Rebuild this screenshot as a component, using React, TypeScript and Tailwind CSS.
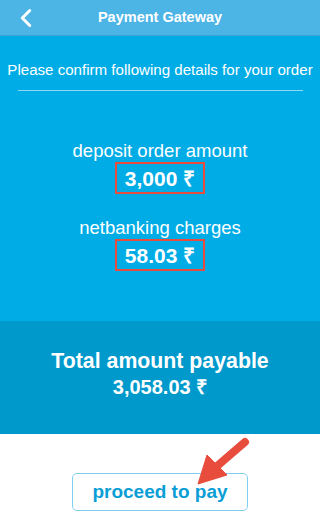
import { ChevronLeft } from "lucide-react";

function Amount({ label, value }: { label: string; value: string }) {
  return (
    <div className="flex flex-col items-center">
      <p className="text-[18.5px] leading-[22px]">{label}</p>
      <div className="border-2 border-[#e84c3d] h-[32px] w-[90px] flex items-center justify-center">
        <span className="text-[21px] font-bold leading-none">{value}</span>
      </div>
    </div>
  );
}

export default function App() {
  return (
    <div className="w-[320px] h-[519px] bg-white text-white flex flex-col" style={{ fontFamily: '"Liberation Sans", Arial, sans-serif' }}>
      <div className="h-[36px] bg-[#4db4e6] border-b border-[#3aa3d6] relative flex items-center justify-center shrink-0">
        <ChevronLeft className="absolute left-[11px] top-[3px] w-[30px] h-[30px]" strokeWidth={2.4} />
        <span className="text-[14.5px] font-semibold">Payment Gateway</span>
      </div>

      <div className="h-[285px] bg-[#00ace6] flex flex-col items-center shrink-0">
        <p className="mt-[24px] text-[15.1px] leading-[19px]">Please confirm following details for your order</p>
        <div className="mt-[11px] w-[285px] h-px bg-[#8fd7f2]" />
        <div className="mt-[49px]">
          <Amount label="deposit order amount" value="3,000 ₹" />
        </div>
        <div className="mt-[23px]">
          <Amount label="netbanking charges" value="58.03 ₹" />
        </div>
      </div>

      <div className="h-[113px] bg-[#0099cc] flex flex-col items-center justify-center pb-[8px] shrink-0">
        <p className="text-[21.3px] font-bold leading-[26px]">Total amount payable</p>
        <p className="text-[20px] font-bold leading-[26px]">3,058.03 ₹</p>
      </div>

      <div className="flex-1 relative flex justify-center">
        <button className="mt-[39px] w-[176px] h-[38px] border border-[#7fd0f0] rounded-[5px] text-[#0a9ed6] text-[19px] font-bold">
          proceed to pay
        </button>
        <svg className="absolute left-[190px] top-[1px]" width="64" height="56" viewBox="0 0 64 56">
          <path d="M55 7 L26 32" stroke="#e84c3d" strokeWidth="8" strokeLinecap="round" />
          <path d="M8 49 L17 20 L37 40 Z" fill="#e84c3d" strokeLinejoin="round" stroke="#e84c3d" strokeWidth="1" />
        </svg>
      </div>
    </div>
  );
}
